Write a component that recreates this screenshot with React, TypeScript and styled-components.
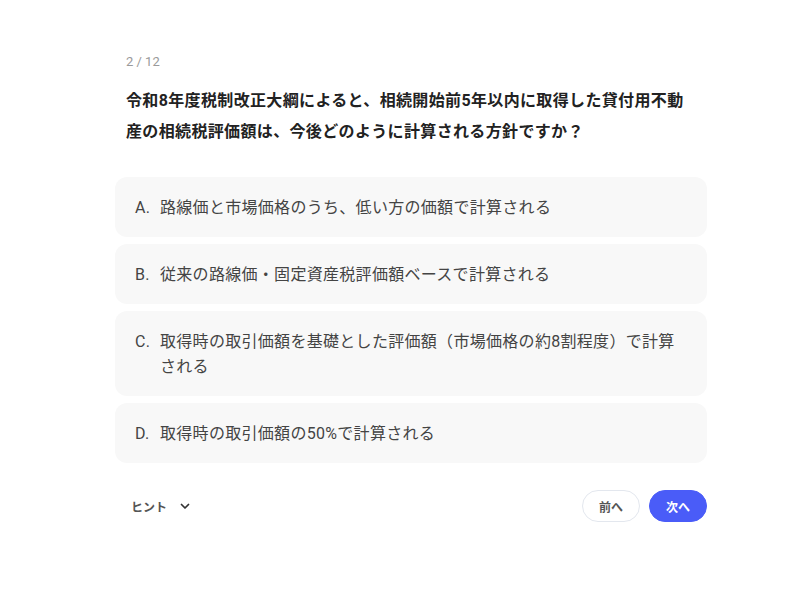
import React from 'react';
import styled, { createGlobalStyle } from 'styled-components';

/**
 * Styles
 */

const GlobalStyle = createGlobalStyle`
  html, body {
    margin: 0;
    padding: 0;
    background: #ffffff;
  }

  body {
    font-family: Roboto, "Noto Sans CJK JP", sans-serif;
    color: #222222;
  }
`;

const Page = styled.div`
  padding: 54px 0 0 115px;
`;

const Quiz = styled.div`
  width: 592px;
`;

const Header = styled.div`
  padding: 0 11px;
`;

const Progress = styled.div`
  font-size: 13px;
  color: #9a9a9a;
  line-height: 16px;
`;

const Question = styled.h1`
  margin: 15px 0 0;
  font-size: 16px;
  font-weight: 700;
  line-height: 31px;
  letter-spacing: 0.35px;
  color: #222222;
`;

const OptionList = styled.div`
  margin-top: 30px;
  display: flex;
  flex-direction: column;
  gap: 7px;
`;

const Option = styled.button`
  display: flex;
  gap: 8px;
  width: 100%;
  box-sizing: border-box;
  padding: 17.5px 20px;
  border: none;
  border-radius: 12px;
  background: #f8f8f8;
  text-align: left;
  font-family: inherit;
  font-size: 16px;
  line-height: 25px;
  letter-spacing: 0.3px;
  color: #444444;
  cursor: pointer;
`;

const OptionLabel = styled.span`
  flex: none;
  width: 17px;
`;

const Footer = styled.div`
  margin-top: 27px;
  display: flex;
  align-items: center;
  justify-content: space-between;
`;

const HintToggle = styled.button`
  display: flex;
  align-items: center;
  gap: 12px;
  padding: 0 0 0 16px;
  border: none;
  background: none;
  font-family: inherit;
  font-size: 12px;
  font-weight: 700;
  color: #555555;
  cursor: pointer;
`;

const NavGroup = styled.div`
  display: flex;
  gap: 9px;
`;

const NavButton = styled.button<{ $primary?: boolean }>`
  height: 32px;
  padding: 0 16px;
  border-radius: 16px;
  border: 1px solid ${({ $primary }) => ($primary ? '#4a5cf8' : '#e3e7ee')};
  background: ${({ $primary }) => ($primary ? '#4a5cf8' : '#ffffff')};
  color: ${({ $primary }) => ($primary ? '#ffffff' : '#555555')};
  font-family: inherit;
  font-size: 12px;
  font-weight: 700;
  cursor: pointer;
`;

/**
 * Data
 */

const options = [
  { key: 'A', text: '路線価と市場価格のうち、低い方の価額で計算される' },
  { key: 'B', text: '従来の路線価・固定資産税評価額ベースで計算される' },
  {
    key: 'C',
    text: '取得時の取引価額を基礎とした評価額（市場価格の約8割程度）で計算される',
  },
  { key: 'D', text: '取得時の取引価額の50%で計算される' },
];

/**
 * Component
 */

export default function App(): JSX.Element {
  return (
    <Page>
      <GlobalStyle />
      <Quiz>
        <Header>
          <Progress>2 / 12</Progress>
          <Question>
            令和8年度税制改正大綱によると、相続開始前5年以内に取得した貸付用不動産の相続税評価額は、今後どのように計算される方針ですか？
          </Question>
        </Header>

        <OptionList>
          {options.map((o) => (
            <Option key={o.key}>
              <OptionLabel>{o.key}.</OptionLabel>
              <span>{o.text}</span>
            </Option>
          ))}
        </OptionList>

        <Footer>
          <HintToggle>
            ヒント
            <svg width="12" height="12" viewBox="0 0 24 24" fill="none">
              <path
                d="M5 9l7 7 7-7"
                stroke="#333"
                strokeWidth="3.5"
                strokeLinecap="round"
                strokeLinejoin="round"
              />
            </svg>
          </HintToggle>
          <NavGroup>
            <NavButton>前へ</NavButton>
            <NavButton $primary>次へ</NavButton>
          </NavGroup>
        </Footer>
      </Quiz>
    </Page>
  );
}
